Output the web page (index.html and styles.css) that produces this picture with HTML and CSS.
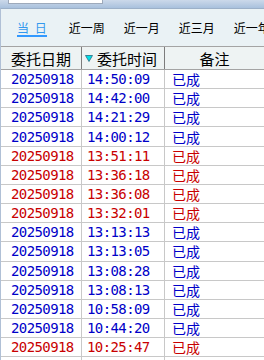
FILE: index.html
```html
<!DOCTYPE html>
<html lang="zh">
<head>
<meta charset="utf-8">
<link rel="stylesheet" href="styles.css">
</head>
<body>
<div class="top"><div class="search"></div></div>
<div class="panel">
  <div class="tabs">
    <span class="tab active">当 日</span>
    <span class="tab">近一周</span>
    <span class="tab">近一月</span>
    <span class="tab">近三月</span>
    <span class="tab">近一年</span>
  </div>
  <div class="grid">
    <div class="row head">
      <div class="cell c1">委托日期</div>
      <div class="cell c2"><svg class="sort" width="8" height="7" viewBox="0 0 8 7"><polygon points="0.5,0.5 7.5,0.5 4,6.5" fill="#00e0e8" stroke="#2a6a80" stroke-width="0.8"/></svg>委托时间</div>
      <div class="cell c3">备注</div>
    </div>
    <div class="row b"><div class="cell c1">20250918</div><div class="cell c2">14:50:09</div><div class="cell c3">已成</div></div>
    <div class="row b"><div class="cell c1">20250918</div><div class="cell c2">14:42:00</div><div class="cell c3">已成</div></div>
    <div class="row b"><div class="cell c1">20250918</div><div class="cell c2">14:21:29</div><div class="cell c3">已成</div></div>
    <div class="row b"><div class="cell c1">20250918</div><div class="cell c2">14:00:12</div><div class="cell c3">已成</div></div>
    <div class="row r"><div class="cell c1">20250918</div><div class="cell c2">13:51:11</div><div class="cell c3">已成</div></div>
    <div class="row r"><div class="cell c1">20250918</div><div class="cell c2">13:36:18</div><div class="cell c3">已成</div></div>
    <div class="row r"><div class="cell c1">20250918</div><div class="cell c2">13:36:08</div><div class="cell c3">已成</div></div>
    <div class="row r"><div class="cell c1">20250918</div><div class="cell c2">13:32:01</div><div class="cell c3">已成</div></div>
    <div class="row b"><div class="cell c1">20250918</div><div class="cell c2">13:13:13</div><div class="cell c3">已成</div></div>
    <div class="row b"><div class="cell c1">20250918</div><div class="cell c2">13:13:05</div><div class="cell c3">已成</div></div>
    <div class="row b"><div class="cell c1">20250918</div><div class="cell c2">13:08:28</div><div class="cell c3">已成</div></div>
    <div class="row b"><div class="cell c1">20250918</div><div class="cell c2">13:08:13</div><div class="cell c3">已成</div></div>
    <div class="row b"><div class="cell c1">20250918</div><div class="cell c2">10:58:09</div><div class="cell c3">已成</div></div>
    <div class="row b"><div class="cell c1">20250918</div><div class="cell c2">10:44:20</div><div class="cell c3">已成</div></div>
    <div class="row r"><div class="cell c1">20250918</div><div class="cell c2">10:25:47</div><div class="cell c3">已成</div></div>
    <div class="row b"><div class="cell c1"></div><div class="cell c2"></div><div class="cell c3"></div></div>
  </div>
</div>
</body>
</html>
```
FILE: styles.css
```css
html, body {
  margin: 0;
  padding: 0;
}
body {
  width: 264px;
  height: 360px;
  overflow: hidden;
  background: #ffffff;
  font-family: "Noto Sans CJK SC", "Noto Sans", sans-serif;
}
.top {
  height: 8px;
  background: linear-gradient(#ccd9ea, #a9c1dd);
}
.search {
  margin-left: 8px;
  width: 95px;
  height: 4px;
  box-sizing: border-box;
  background: #ffffff;
  border: 1px solid #9eaabb;
  border-top: 0;
}
.panel {
  border-top: 1px solid #9cb0c8;
  border-left: 1px solid #b0c0d6;
  background: #eaf2f5;
  width: 300px;
}
.tabs {
  height: 37px;
  box-sizing: border-box;
  padding: 13px 0 0 16px;
  display: flex;
  align-items: flex-start;
  gap: 19px;
  font-size: 12px;
  line-height: 12px;
  white-space: nowrap;
  color: #000000;
}
.tab.active {
  color: #3399ee;
  word-spacing: 3px;
  padding-bottom: 1px;
  border-bottom: 2px solid #3399ff;
  margin-right: 3px;
}
.grid {
  background: #ffffff;
}
.row {
  display: grid;
  grid-template-columns: 81px 83px 100px;
  box-sizing: border-box;
  height: 19.16px;
  border-bottom: 1px solid #c8c8c8;
}
.cell {
  box-sizing: border-box;
  border-right: 1px solid #c8c8c8;
  display: flex;
  align-items: center;
  white-space: nowrap;
  overflow: hidden;
}
.row.b, .row.r {
  font-family: "DejaVu Sans Mono", monospace;
  font-size: 14px;
  letter-spacing: -0.6px;
}
.row.b { color: #0000c8; }
.row.r { color: #c80000; }
.row .c1 { padding-left: 10px; }
.row .c2 { padding-left: 5px; }
.row .c3 {
  padding-left: 7px;
  font-family: "Noto Sans CJK SC", sans-serif;
  font-size: 14px;
  letter-spacing: 0;
}
.row.head {
  height: 24px;
  border-top: 1px solid #a4a4a4;
  border-bottom: 1px solid #a4a4a4;
  background: #eef3f3;
  color: #000000;
  font-size: 15px;
  letter-spacing: 0;
  font-family: "Noto Sans CJK SC", sans-serif;
}
.row.head .cell {
  border-right-color: #7c7c7c;
}
.row.head .c1 {
  padding-left: 0;
  justify-content: center;
}
.row.head .c2 {
  padding-left: 3px;
}
.row.head .c3 {
  padding-left: 0;
  justify-content: center;
  font-size: 15px;
}
.sort {
  margin-right: 4px;
  margin-top: 1px;
  flex: none;
}
```
